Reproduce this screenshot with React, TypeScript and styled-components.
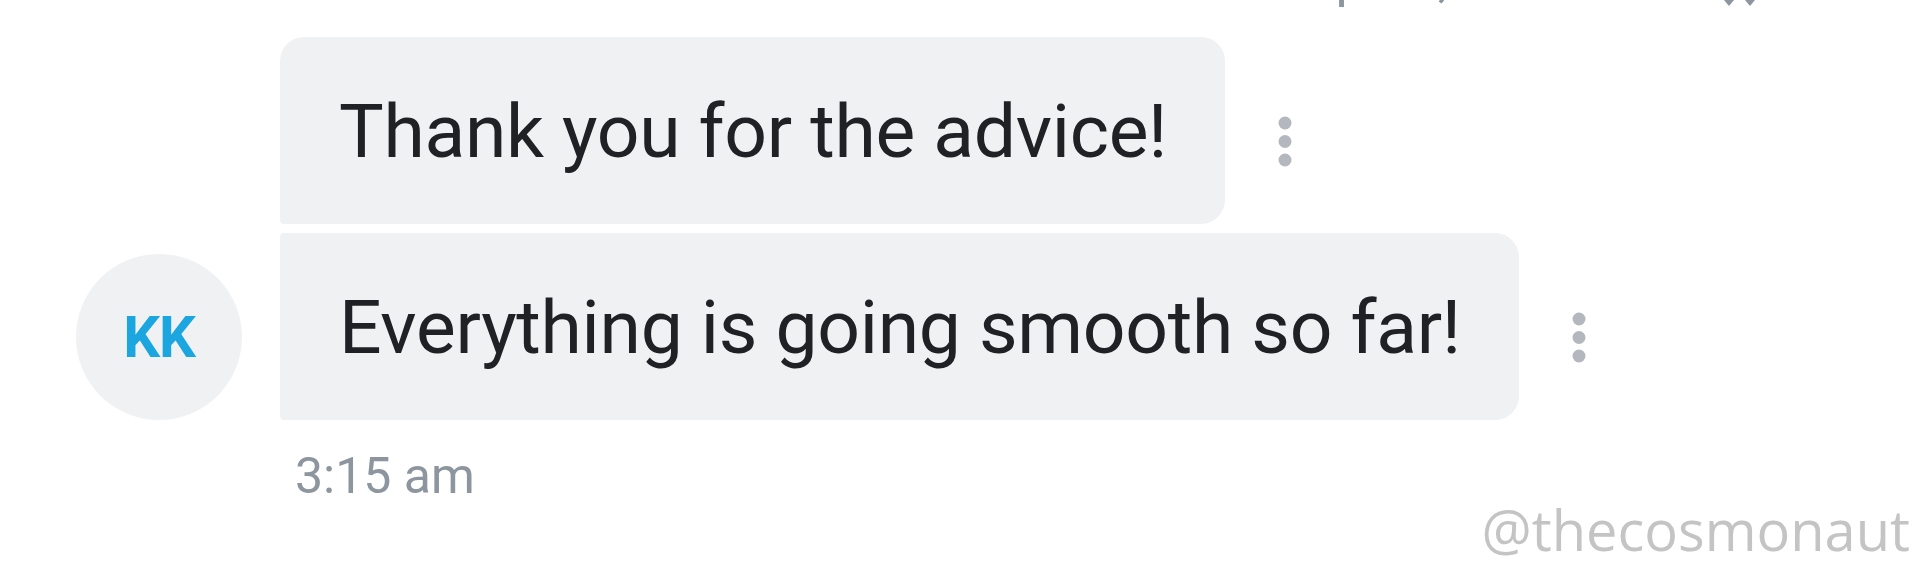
import React from 'react';
import styled, { createGlobalStyle } from 'styled-components';

const GlobalStyle = createGlobalStyle`
  html, body {
    margin: 0;
    padding: 0;
    background: #ffffff;
  }
  body {
    font-family: Roboto, "Liberation Sans", sans-serif;
  }
`;

interface Message {
  id: number;
  text: string;
}

const messages: Message[] = [
  { id: 1, text: 'Thank you for the advice!' },
  { id: 2, text: 'Everything is going smooth so far!' },
];

const KebabIcon: React.FC = () => (
  <svg width="14" height="51" viewBox="0 0 14 51">
    <circle cx="7" cy="7" r="6.5" fill="#b4b8be" />
    <circle cx="7" cy="25.5" r="6.5" fill="#b4b8be" />
    <circle cx="7" cy="44" r="6.5" fill="#b4b8be" />
  </svg>
);

const App: React.FC = () => {
  return (
    <Page>
      <GlobalStyle />
      <TopClip>
        <ClippedLine>Sep 30, 2020</ClippedLine>
        <ClippedIcon>
          <svg width="34" height="8" viewBox="0 0 34 8">
            <path d="M0 0 L5 6 L10 0 Z" fill="#8d959e" strokeLinejoin="round" />
            <path d="M21 0 L26 6 L31 0 Z" fill="#8d959e" strokeLinejoin="round" />
          </svg>
        </ClippedIcon>
      </TopClip>

      <Group>
        {messages.map((m, i) => (
          <BubbleRow key={m.id} row={i + 1}>
            <Bubble first={i === 0}>{m.text}</Bubble>
            <Kebab>
              <KebabIcon />
            </Kebab>
          </BubbleRow>
        ))}
        <Avatar>KK</Avatar>
        <Timestamp>3:15 am</Timestamp>
      </Group>

      <Watermark>@thecosmonaut</Watermark>
    </Page>
  );
};

// Styled Components
const Page = styled.div`
  position: relative;
  width: 1920px;
  height: 576px;
  overflow: hidden;
  background: #ffffff;
`;

const TopClip = styled.div`
  height: 12px;
  overflow: hidden;
  display: grid;
  grid-template-columns: 1276px 448px auto;
  align-items: start;
`;

const ClippedLine = styled.div`
  grid-column: 2;
  grid-row: 1;
  font-family: Roboto, "Liberation Sans", sans-serif;
  font-size: 53px;
  line-height: 53px;
  color: #8d959e;
  white-space: nowrap;
  margin-top: -48px;
`;

const ClippedIcon = styled.div`
  grid-column: 3;
  grid-row: 1;

  svg {
    display: block;
  }
`;

const Group = styled.div`
  display: grid;
  grid-template-columns: 166px auto;
  column-gap: 38px;
  row-gap: 9px;
  padding-left: 76px;
  margin-top: 25px;
`;

const BubbleRow = styled.div<{ row: number }>`
  grid-column: 2;
  grid-row: ${p => p.row};
  display: flex;
  align-items: center;
`;

const Bubble = styled.div<{ first?: boolean }>`
  height: 187px;
  box-sizing: border-box;
  display: flex;
  align-items: center;
  padding: 0 58px 0 59px;
  background: #f0f1f3;
  border-radius: ${p => (p.first ? '24px 24px 24px 4px' : '4px 24px 24px 4px')};
  font-family: Roboto, "Liberation Sans", sans-serif;
  font-size: 75px;
  letter-spacing: -0.3px;
  color: #202124;
  white-space: nowrap;
`;

const Kebab = styled.div`
  margin-left: 53px;
  padding-top: 22px;
  display: flex;
  align-items: center;

  svg {
    display: block;
  }
`;

const Avatar = styled.div`
  grid-column: 1;
  grid-row: 2;
  align-self: end;
  width: 166px;
  height: 166px;
  border-radius: 50%;
  background: #f0f1f3;
  display: flex;
  align-items: center;
  justify-content: center;
  font-family: Roboto, "Liberation Sans", sans-serif;
  font-weight: 700;
  font-size: 58px;
  letter-spacing: -1px;
  color: #1ba6e0;
`;

const Timestamp = styled.div`
  grid-column: 2;
  grid-row: 3;
  margin-top: 17px;
  padding-left: 15px;
  font-family: Roboto, "Liberation Sans", sans-serif;
  font-size: 50px;
  line-height: 60px;
  color: #8d959e;
`;

const Watermark = styled.div`
  position: absolute;
  right: 10px;
  bottom: 9px;
  font-family: "Open Sans", "Noto Sans", sans-serif;
  font-size: 56px;
  color: #c4c4c4;
`;

export default App;
